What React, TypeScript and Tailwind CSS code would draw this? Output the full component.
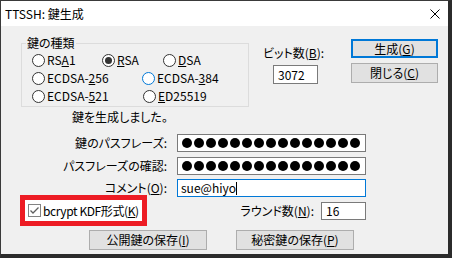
import React from "react";

function Radio({ checked, focus, children, className = "" }: { checked?: boolean; focus?: boolean; children: React.ReactNode; className?: string }) {
  return (
    <div className={`flex items-center h-[18px] ${className}`}>
      <span
        className={`w-[13px] h-[13px] rounded-full border bg-white flex items-center justify-center shrink-0 ${
          focus ? "border-[#0078d7]" : "border-[#333333]"
        }`}
      >
        {checked && <span className="w-[7px] h-[7px] rounded-full bg-[#333333]" />}
      </span>
      <span className="ml-[2px] leading-[14px]">{children}</span>
    </div>
  );
}

function Btn({ children, def, className = "" }: { children: React.ReactNode; def?: boolean; className?: string }) {
  return (
    <div
      className={`flex items-center justify-center bg-[#e1e1e1] leading-[14px] ${
        def ? "border-2 border-[#0078d7]" : "border border-[#adadad]"
      } ${className}`}
    >
      {children}
    </div>
  );
}

function Dots() {
  return (
    <div className="flex gap-[2px] pl-[4px]">
      {Array.from({ length: 15 }).map((_, i) => (
        <span key={i} className="w-[10px] h-[10px] rounded-full bg-black" />
      ))}
    </div>
  );
}

export default function App() {
  return (
    <div className="w-[452px] h-[258px] flex flex-col border-l border-t border-[#3a3a3a] border-r-4 border-b-4 border-r-[#2b2b2b] border-b-[#2b2b2b] font-['Noto_Sans_CJK_JP',sans-serif] [font-feature-settings:'palt'] text-[12px] text-black overflow-hidden">
      {/* title bar */}
      <div className="h-[25px] bg-white flex items-center pl-[4px] shrink-0">
        <span className="leading-[14px]">TTSSH: 鍵生成</span>
        <svg className="ml-auto mr-[8px]" width="10" height="10" viewBox="0 0 10 10">
          <path d="M0.5 0.5 L9.5 9.5 M9.5 0.5 L0.5 9.5" stroke="#000" strokeWidth="1" />
        </svg>
      </div>

      {/* body */}
      <div className="flex-1 bg-[#f0f0f0] flex flex-col">
        {/* top section */}
        <div className="flex items-start">
          <div className="relative ml-[20px] mt-[17px] w-[228px] h-[64px] border border-[#dcdcdc] pl-[10px] pt-[7px]">
            <span className="absolute left-[4px] top-[-8px] px-[1px] bg-[#f0f0f0] leading-[14px]">鍵の種類</span>
            <div className="flex">
              <Radio className="w-[70px]">
                RS<u>A</u>1
              </Radio>
              <Radio checked className="w-[61px]">
                <u>R</u>SA
              </Radio>
              <Radio>
                <u>D</u>SA
              </Radio>
            </div>
            <div className="flex">
              <Radio className="w-[110px]">
                ECDSA-<u>2</u>56
              </Radio>
              <Radio focus>
                ECDSA-<u>3</u>84
              </Radio>
            </div>
            <div className="flex">
              <Radio className="w-[111px]">
                ECDSA-<u>5</u>21
              </Radio>
              <Radio>
                <u>E</u>D25519
              </Radio>
            </div>
          </div>

          <div className="flex flex-col items-start ml-[14px] mt-[20px]">
            <span className="h-[14px] leading-[14px]">
              ビット数(<u>B</u>):
            </span>
            <div className="mt-[5px] ml-[10px] w-[45px] h-[19px] bg-white border border-[#7a7a7a] flex items-center pl-[4px] leading-[14px]">
              3072
            </div>
          </div>

          <div className="ml-auto mr-[10px] mt-[13px] flex flex-col">
            <Btn def className="w-[87px] h-[19px]">
              生成(<u>G</u>)
            </Btn>
            <Btn className="w-[87px] h-[20px] mt-[5px]">
              閉じる(<u>C</u>)
            </Btn>
          </div>
        </div>

        {/* status */}
        <div className="mt-[3px] h-[14px] pl-[71px] leading-[14px]">鍵を生成しました。</div>

        {/* passphrase rows */}
        <div className="flex items-center mt-[10px]">
          <span className="w-[166px] text-right leading-[14px]">鍵のパスフレーズ:</span>
          <div className="ml-[10px] w-[189px] h-[18px] bg-white border border-[#7a7a7a] flex items-center">
            <Dots />
          </div>
        </div>
        <div className="flex items-center mt-[5px]">
          <span className="w-[166px] text-right leading-[14px]">パスフレーズの確認:</span>
          <div className="ml-[10px] w-[189px] h-[18px] bg-white border border-[#7a7a7a] flex items-center">
            <Dots />
          </div>
        </div>
        <div className="flex items-center mt-[4px]">
          <span className="w-[166px] text-right leading-[14px]">
            コメント(<u>O</u>):
          </span>
          <div className="ml-[10px] w-[189px] h-[18px] bg-white border border-[#0078d7] flex items-center pl-[3px] leading-[14px]">
            sue@hiyo
            <span className="w-px h-[13px] bg-black" />
          </div>
        </div>

        {/* checkbox row */}
        <div className="flex items-center mt-[-2px]">
          <div className="ml-[19px] w-[127px] h-[31px] border-[5px] border-[#ed1c24] bg-white flex items-center pl-[3px]">
            <span className="w-[13px] h-[13px] border border-[#838383] bg-white flex items-center justify-center shrink-0">
              <svg width="11" height="11" viewBox="0 0 11 11">
                <path d="M1.5 5.5 L4 8 L9.5 2.5" fill="none" stroke="#5f5f5f" strokeWidth="1.3" />
              </svg>
            </span>
            <span className="ml-[2px] leading-[14px] whitespace-nowrap tracking-[-0.4px]">
              bcrypt KDF形式(<u>K</u>)
            </span>
          </div>
          <div className="ml-auto mr-[82px] flex items-center">
            <span className="leading-[14px]">
              ラウンド数(<u>N</u>):
            </span>
            <div className="ml-[7px] w-[45px] h-[18px] bg-white border border-[#7a7a7a] flex items-center pl-[4px] leading-[14px]">
              16
            </div>
          </div>
        </div>

        {/* bottom buttons */}
        <div className="flex mt-[4px]">
          <Btn className="ml-[88px] w-[118px] h-[20px]">
            公開鍵の保存(<u>I</u>)
          </Btn>
          <Btn className="ml-[29px] w-[118px] h-[20px]">
            秘密鍵の保存(<u>P</u>)
          </Btn>
        </div>
      </div>
    </div>
  );
}
